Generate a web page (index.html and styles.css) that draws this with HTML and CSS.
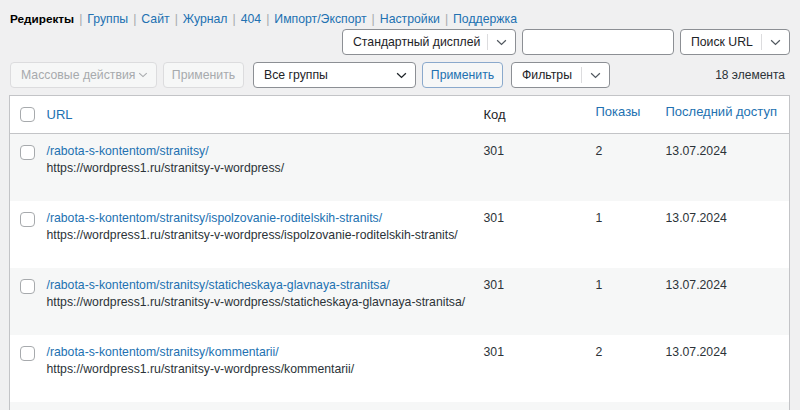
FILE: index.html
```html
<!DOCTYPE html>
<html lang="ru">
<head>
<meta charset="utf-8">
<title>Редиректы</title>
<link rel="stylesheet" href="styles.css">
</head>
<body>
<div class="wrap">
  <nav class="subnav">
    <b class="current">Редиректы</b><span class="sep">|</span><a href="#">Группы</a><span class="sep">|</span><a href="#">Сайт</a><span class="sep">|</span><a href="#">Журнал</a><span class="sep">|</span><a href="#">404</a><span class="sep">|</span><a href="#">Импорт/Экспорт</a><span class="sep">|</span><a href="#">Настройки</a><span class="sep">|</span><a href="#">Поддержка</a>
  </nav>

  <div class="search-row">
    <div class="split w-display"><span class="split-label">Стандартный дисплей</span><span class="split-btn"><svg viewBox="0 0 12 8" width="11" height="7"><path d="M1 1.5 6 6.2 11 1.5" fill="none" stroke="#50575e" stroke-width="1.4"/></svg></span></div>
    <div class="input w-search"></div>
    <div class="split w-searchurl"><span class="split-label">Поиск URL</span><span class="split-btn"><svg viewBox="0 0 12 8" width="11" height="7"><path d="M1 1.5 6 6.2 11 1.5" fill="none" stroke="#50575e" stroke-width="1.4"/></svg></span></div>
  </div>

  <div class="actions-row">
    <div class="select disabled w-bulk"><span>Массовые действия</span><svg viewBox="0 0 12 8" width="10" height="6"><path d="M1 1.5 6 6.2 11 1.5" fill="none" stroke="#a7aaad" stroke-width="1.4"/></svg></div>
    <div class="button disabled w-apply">Применить</div>
    <div class="select w-groups"><span>Все группы</span><svg viewBox="0 0 12 8" width="11" height="7"><path d="M1 1.5 6 6.2 11 1.5" fill="none" stroke="#1d2327" stroke-width="1.5"/></svg></div>
    <div class="button primaryish w-apply">Применить</div>
    <div class="split w-filters"><span class="split-label">Фильтры</span><span class="split-btn"><svg viewBox="0 0 12 8" width="11" height="7"><path d="M1 1.5 6 6.2 11 1.5" fill="none" stroke="#50575e" stroke-width="1.4"/></svg></span></div>
    <div class="count">18 элемента</div>
  </div>

  <table class="list">
    <colgroup>
      <col class="c-check"><col class="c-url"><col class="c-code"><col class="c-hits"><col class="c-date">
    </colgroup>
    <thead>
      <tr>
        <th class="check"><span class="cb"></span></th>
        <th class="sortable">URL</th>
        <th>Код</th>
        <th class="sortable up">Показы</th>
        <th class="sortable up">Последний доступ</th>
      </tr>
    </thead>
    <tbody>
      <tr class="alt">
        <td class="check"><span class="cb"></span></td>
        <td><a href="#">/rabota-s-kontentom/stranitsy/</a><div class="target">https://wordpress1.ru/stranitsy-v-wordpress/</div></td>
        <td>301</td><td>2</td><td class="date">13.07.2024</td>
      </tr>
      <tr>
        <td class="check"><span class="cb"></span></td>
        <td><a href="#">/rabota-s-kontentom/stranitsy/ispolzovanie-roditelskih-stranits/</a><div class="target">https://wordpress1.ru/stranitsy-v-wordpress/ispolzovanie-roditelskih-stranits/</div></td>
        <td>301</td><td>1</td><td class="date">13.07.2024</td>
      </tr>
      <tr class="alt">
        <td class="check"><span class="cb"></span></td>
        <td><a href="#">/rabota-s-kontentom/stranitsy/staticheskaya-glavnaya-stranitsa/</a><div class="target">https://wordpress1.ru/stranitsy-v-wordpress/staticheskaya-glavnaya-stranitsa/</div></td>
        <td>301</td><td>1</td><td class="date">13.07.2024</td>
      </tr>
      <tr>
        <td class="check"><span class="cb"></span></td>
        <td><a href="#">/rabota-s-kontentom/stranitsy/kommentarii/</a><div class="target">https://wordpress1.ru/stranitsy-v-wordpress/kommentarii/</div></td>
        <td>301</td><td>2</td><td class="date">13.07.2024</td>
      </tr>
      <tr class="alt">
        <td class="check"></td><td></td><td></td><td></td><td></td>
      </tr>
    </tbody>
  </table>
</div>
</body>
</html>
```

FILE: styles.css
```css
* { box-sizing: border-box; }
html, body { margin: 0; padding: 0; }
body {
  background: #f0f0f1;
  font-family: "Liberation Sans", Arial, sans-serif;
  font-size: 12.25px;
  color: #1d2327;
  overflow: hidden;
}
a { color: #2271b1; text-decoration: none; }

.wrap { padding: 10px 10px 0 9px; }

.subnav { line-height: 16px; height: 16px; padding-left: 1px; white-space: nowrap; margin-top: 1px; }
.subnav .current { color: #000; font-weight: 700; font-size: 11.75px; }
.subnav .sep { color: #a7aaad; margin: 0 5px; }

.search-row {
  display: flex;
  justify-content: flex-end;
  gap: 6px;
  margin-top: 2px;
}
.actions-row {
  display: flex;
  align-items: center;
  gap: 6px;
  margin-top: 7px;
  padding-left: 1px;
}

.split, .input, .select, .button {
  height: 26px;
  border: 1px solid #8c8f94;
  border-radius: 4px;
  background: #fff;
  display: flex;
  align-items: center;
  white-space: nowrap;
}
.split-label { flex: 1; padding-left: 10px; color: #1d2327; }
.split-btn {
  width: 28px;
  height: 16px;
  border-left: 1px solid #dcdcde;
  display: flex;
  align-items: center;
  justify-content: center;
}
.w-display { width: 174px; }
.w-search { width: 152px; }
.w-searchurl { width: 110px; }
.w-filters { width: 99px; margin-left: 2px; }

.select { padding: 0 8px 0 10px; justify-content: space-between; }
.select.disabled {
  background: #f6f7f7;
  border-color: #dcdcde;
  color: #a7aaad;
  padding-right: 8px;
}
.w-bulk { width: 147px; }
.w-groups { width: 163px; margin-left: 3px; }

.button {
  justify-content: center;
  background: #f6f7f7;
  width: 81px;
}
.button.disabled { border-color: #dcdcde; color: #a7aaad; }
.button.primaryish { border-color: #8aa9cc; color: #2271b1; }

.count { margin-left: auto; margin-right: 5px; color: #2c3338; font-size: 12px; }

.list {
  margin-top: 7px;
  width: 781px;
  border: 1px solid #c3c4c7;
  border-collapse: collapse;
  background: #fff;
  table-layout: fixed;
}
.c-check { width: 37px; }
.c-url { width: 437px; }
.c-code { width: 112px; }
.c-hits { width: 70px; }
.c-date { width: 124px; }

.list th {
  height: 38px;
  text-align: left;
  font-weight: 400;
  font-size: 13px;
  color: #1d2327;
  border-bottom: 1px solid #c3c4c7;
  padding: 0;
  vertical-align: middle;
  white-space: nowrap;
}
.list th.sortable { color: #2271b1; }
.list th.up { padding-bottom: 6px; }
.list td {
  height: 67px;
  padding: 9px 0 0;
  vertical-align: top;
  line-height: 17px;
  color: #2c3338;
  white-space: nowrap;
}
.list td a { display: block; }
.list tr.alt td { background: #f6f7f7; }
.list .check { padding-left: 10px; }
.list td.check { padding-top: 11px; }
.cb {
  display: block;
  width: 15px;
  height: 15px;
  border: 1px solid #a7aaad;
  border-radius: 4px;
  background: #fff;
}
.target { color: #2c3338; }
.date { color: #3c434a; }
```
